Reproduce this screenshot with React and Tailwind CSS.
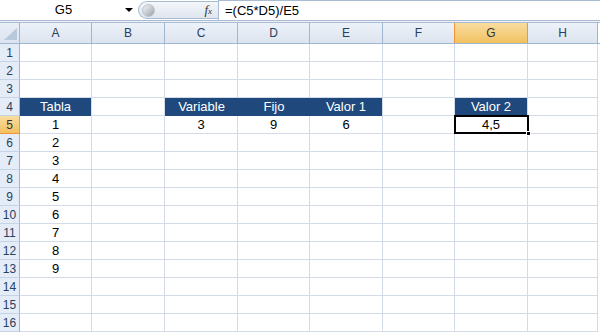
import React from "react";

const COLS = [
  { k: "A", w: 72 },
  { k: "B", w: 73 },
  { k: "C", w: 73 },
  { k: "D", w: 72 },
  { k: "E", w: 73 },
  { k: "F", w: 72 },
  { k: "G", w: 73 },
  { k: "H", w: 70 },
];

const HEAD = { A4: "Tabla", C4: "Variable", D4: "Fijo", E4: "Valor 1", G4: "Valor 2" };
const DATA = {
  A5: "1", A6: "2", A7: "3", A8: "4", A9: "5", A10: "6", A11: "7", A12: "8", A13: "9",
  C5: "3", D5: "9", E5: "6", G5: "4,5",
};

const font = { fontFamily: '"Liberation Sans", Arial, sans-serif' };

function Cell({ col, row }) {
  const id = col.k + row;
  const head = HEAD[id];
  const val = DATA[id];
  const nextHead = HEAD[String.fromCharCode(col.k.charCodeAt(0) + 1) + row];
  if (head) {
    return (
      <div
        className={`h-full shrink-0 flex items-center justify-center bg-[#1f497d] text-white text-[13px] ${nextHead ? "" : "border-r border-[#d4dbe8]"}`}
        style={{ width: col.w }}
      >
        {head}
      </div>
    );
  }
  return (
    <div
      className="h-full shrink-0 flex items-center justify-center border-r border-b border-[#d4dbe8] text-[13px] text-black"
      style={{ width: col.w }}
    >
      {val}
    </div>
  );
}

export default function App() {
  const rows = Array.from({ length: 16 }, (_, i) => i + 1);
  return (
    <div className="w-[600px] h-[332px] overflow-hidden bg-white relative" style={font}>
      {/* formula bar */}
      <div className="h-[20px] flex items-stretch bg-white">
        <div className="w-[138px] flex items-center relative">
          <span className="flex-1 text-center text-[13px] text-black pl-[2px]">G5</span>
          <span className="w-0 h-0 border-l-[4px] border-r-[4px] border-t-[4px] border-l-transparent border-r-transparent border-t-black mr-[5px]" />
        </div>
        <div className="w-[80px] mt-[1px] mb-[1px] rounded-l-full border border-r-0 border-[#a9bbd2] bg-gradient-to-b from-[#f3f6fa] to-[#dfe6ef] flex items-center justify-between pl-[3px] pr-[6px]">
          <div className="w-[13px] h-[13px] rounded-full bg-gradient-to-br from-[#f4f4f4] via-[#c8ccd2] to-[#9aa1aa] border border-[#b9c1cc]" />
          <span className="text-[13px] italic text-[#333]" style={{ fontFamily: '"Liberation Serif", serif' }}>
            f<span className="text-[9px]">x</span>
          </span>
        </div>
        <div className="flex-1 border-l border-t border-[#a9bbd2] flex items-center pl-[6px] text-[13px] text-black">
          =(C5*D5)/E5
        </div>
      </div>
      <div className="h-[1px] bg-[#a9bcd4]" />
      <div className="h-[1px] bg-[#eef2f7]" />
      <div className="h-[1px] bg-[#a9bcd4]" />

      {/* column headers */}
      <div className="h-[21px] flex border-b border-[#9eb6ce]">
        <div className="w-[20px] shrink-0 border-r border-[#9eb6ce] bg-gradient-to-b from-[#e9eff7] to-[#dbe4f0] relative">
          <div className="absolute right-[2px] bottom-[3px] w-0 h-0 border-l-[13px] border-t-[12px] border-l-transparent border-t-transparent border-r-0 border-b-0" style={{ borderBottom: "12px solid #b8c8db", borderLeft: "13px solid transparent", borderTop: 0 }} />
        </div>
        {COLS.map((c) => (
          <div
            key={c.k}
            className={`shrink-0 flex items-center justify-center text-[12px] border-r ${
              c.k === "G"
                ? "bg-gradient-to-b from-[#f9dca0] to-[#f1c15f] border-[#f29536] border-l text-[#333] -ml-[1px]"
                : "bg-gradient-to-b from-[#edf2f9] to-[#dce4ef] border-[#9eb6ce] text-[#27415f]"
            }`}
            style={{ width: c.k === "G" ? c.w + 1 : c.w }}
          >
            {c.k}
          </div>
        ))}
        <div className="flex-1 bg-white" />
      </div>

      {/* rows */}
      {rows.map((r) => (
        <div key={r} className="h-[18px] flex">
          <div
            className={`w-[20px] shrink-0 flex items-center justify-center text-[12px] border-r border-b ${
              r === 5
                ? "bg-gradient-to-b from-[#f9dca0] to-[#f1c15f] border-[#f29536] text-[#333]"
                : "bg-[#e4ecf7] border-r-[#9eb6ce] border-b-[#c5d3e4] text-[#27415f]"
            }`}
          >
            {r}
          </div>
          {COLS.map((c) => (
            <Cell key={c.k} col={c} row={r} />
          ))}
          <div className="flex-1 bg-white" />
        </div>
      ))}

      {/* selection box on G5 */}
      <div className="absolute left-[454px] top-[115px] w-[75px] h-[19px] border-2 border-black pointer-events-none" />
      <div className="absolute left-[526px] top-[131px] w-[5px] h-[5px] bg-black border border-white" />
    </div>
  );
}
